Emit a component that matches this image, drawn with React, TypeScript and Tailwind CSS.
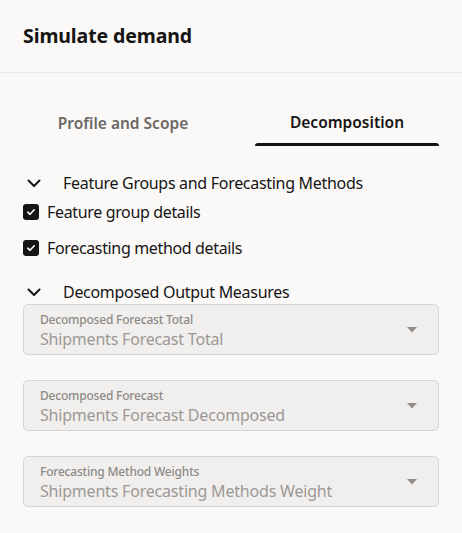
import React from "react";

const Chevron = () => (
  <svg width="16" height="16" viewBox="0 0 16 16" fill="none">
    <path d="M2.5 5.5 L8 11 L13.5 5.5" stroke="#161513" strokeWidth="2" strokeLinecap="round" strokeLinejoin="round" />
  </svg>
);

const Checkbox = () => (
  <div className="w-[16px] h-[16px] rounded-[3px] bg-[#161513] flex items-center justify-center shrink-0">
    <svg width="10" height="10" viewBox="0 0 10 10" fill="none">
      <path d="M1.8 5.2 L4 7.3 L8.2 2.8" stroke="#ffffff" strokeWidth="1.6" strokeLinecap="round" strokeLinejoin="round" />
    </svg>
  </div>
);

const Select = ({ label, value }: { label: string; value: string }) => (
  <div className="h-[51px] rounded-[5px] border border-[#d7d4d1] bg-[#f1efed] flex items-center pl-[16px] pr-[21px] pt-[2px]">
    <div className="flex-1 flex flex-col">
      <span className="text-[12px] leading-[16px] font-medium tracking-[-0.2px] text-[#8d8a87]">{label}</span>
      <span className="text-[16px] leading-[22px] tracking-[-0.2px] text-[#9c9895]">{value}</span>
    </div>
    <svg width="10" height="6" viewBox="0 0 10 6" className="-mt-[2px]">
      <path d="M0 0 L10 0 L5 5.5 Z" fill="#8f8c89" />
    </svg>
  </div>
);

export default function App() {
  return (
    <div
      className="w-[462px] h-[533px] bg-[#fbf9f8] text-[#161513] overflow-hidden"
      style={{ fontFamily: '"Noto Sans", "Open Sans", sans-serif' }}
    >
      <div className="h-[73px] border-b border-[#ebe9e6] flex items-center px-[23px]">
        <h1 className="text-[19.5px] font-bold tracking-[-0.1px]">Simulate demand</h1>
      </div>

      <div className="px-[23px]">
        <div className="flex mt-[29px] gap-[32px]">
          <div className="w-[200px] h-[44px] flex items-center justify-center text-[15.5px] font-semibold text-[#6b6865]">
            Profile and Scope
          </div>
          <div className="w-[184px] h-[44px] flex flex-col items-center">
            <div className="flex-1 flex items-center text-[15.5px] font-semibold text-[#161513]">Decomposition</div>
            <div className="w-full h-[3px] bg-[#161513] rounded-t-[3px]" />
          </div>
        </div>

        <div className="mt-[25px] h-[24px] flex items-center">
          <div className="w-[40px] pl-[3px]">
            <Chevron />
          </div>
          <span className="text-[16px] tracking-[-0.3px]">Feature Groups and Forecasting Methods</span>
        </div>

        <div className="mt-[5px] h-[24px] flex items-center gap-[8px]">
          <Checkbox />
          <span className="text-[16px] tracking-[-0.35px]">Feature group details</span>
        </div>
        <div className="mt-[12px] h-[24px] flex items-center gap-[8px]">
          <Checkbox />
          <span className="text-[16px] tracking-[-0.35px]">Forecasting method details</span>
        </div>

        <div className="mt-[20px] h-[24px] flex items-center">
          <div className="w-[40px] pl-[3px]">
            <Chevron />
          </div>
          <span className="text-[16px] tracking-[-0.3px]">Decomposed Output Measures</span>
        </div>

        <div className="flex flex-col gap-[25px]">
          <Select label="Decomposed Forecast Total" value="Shipments Forecast Total" />
          <Select label="Decomposed Forecast" value="Shipments Forecast Decomposed" />
          <Select label="Forecasting Method Weights" value="Shipments Forecasting Methods Weight" />
        </div>
      </div>
    </div>
  );
}
